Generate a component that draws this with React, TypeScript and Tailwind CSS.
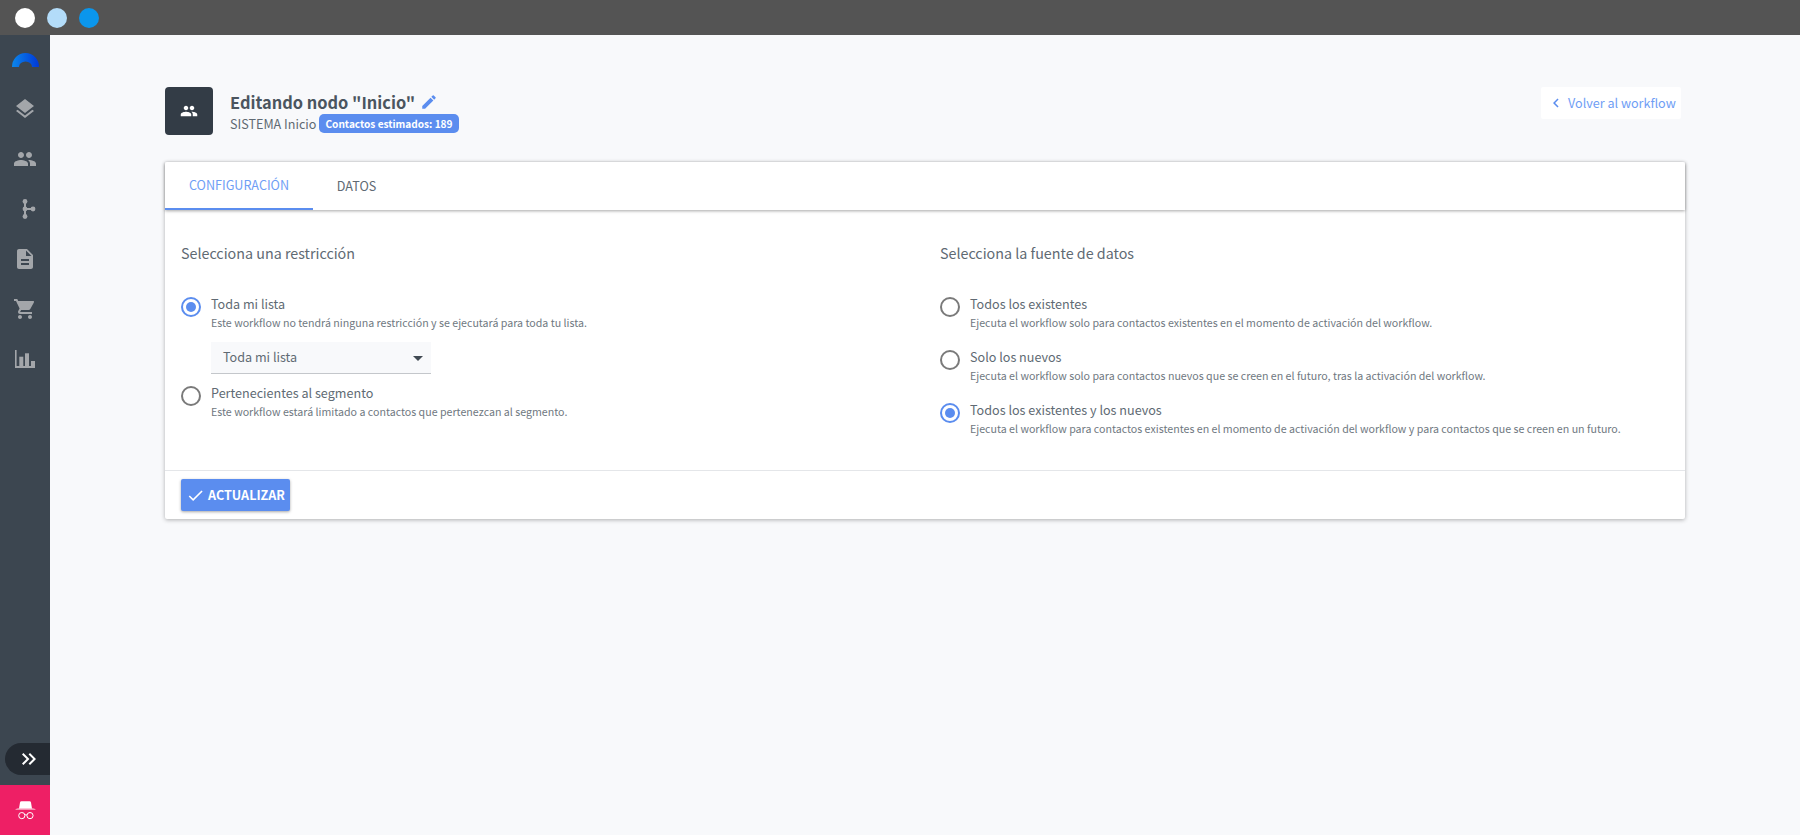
import { MdLayers, MdPeople, MdDescription, MdShoppingCart, MdEdit, MdChevronLeft, MdArrowDropDown, MdCheck, MdKeyboardDoubleArrowRight } from 'react-icons/md';

const font = { fontFamily: '"Noto Sans CJK JP", "Noto Sans", sans-serif' };

function Logo() {
  return (
    <svg width="27" height="14" viewBox="0 0 27 14">
      <defs>
        <linearGradient id="lg" x1="0" x2="1" y1="0" y2="0">
          <stop offset="0" stopColor="#0b86ea" />
          <stop offset="1" stopColor="#0038d8" />
        </linearGradient>
      </defs>
      <path d="M0 14 A13.5 14 0 0 1 27 14 H20 A6.5 5.5 0 0 0 7 14 Z" fill="url(#lg)" />
    </svg>
  );
}

function BranchIcon() {
  return (
    <svg width="24" height="24" viewBox="0 0 24 24" fill="#a3a6aa">
      <circle cx="12" cy="4.5" r="2.4" />
      <circle cx="12" cy="12" r="2.4" />
      <circle cx="12" cy="19.5" r="2.4" />
      <circle cx="20" cy="12" r="2.4" />
      <rect x="11" y="4" width="2" height="15" />
      <rect x="12" y="11" width="8" height="2" />
    </svg>
  );
}

function ChartIcon() {
  return (
    <svg width="20" height="18" viewBox="0 0 20 18" fill="#a3a6aa">
      <path d="M0 0h1.6v16H20v2H0z" />
      <rect x="4.3" y="6.7" width="4" height="10" />
      <rect x="10" y="3.3" width="4" height="13" />
      <rect x="16" y="11" width="4" height="6" />
    </svg>
  );
}

function SpyIcon() {
  return (
    <svg width="21" height="19" viewBox="0 0 21 19" fill="none">
      <path d="M5 1.5 Q5.2 0.2 6.5 0.2 H14.5 Q15.8 0.2 16 1.5 L17 7.6 H4 Z" fill="#fff" />
      <path d="M0 8.6 Q1.5 7.8 4 7.6 H17 Q19.5 7.8 21 8.6 Z" fill="#fff" />
      <circle cx="6.8" cy="14.6" r="3.1" stroke="#fff" strokeWidth="1" />
      <circle cx="15" cy="14.6" r="3.1" stroke="#fff" strokeWidth="1" />
      <path d="M9.9 14 Q10.9 13.4 11.9 14" stroke="#fff" strokeWidth="1" />
    </svg>
  );
}

function Radio({ checked }: { checked?: boolean }) {
  return (
    <span className={`flex h-5 w-5 shrink-0 items-center justify-center rounded-full border-2 ${checked ? 'border-[#5b8def]' : 'border-[#7a7a7a]'}`}>
      {checked && <span className="h-[10px] w-[10px] rounded-full bg-[#5b8def]" />}
    </span>
  );
}

function Option({ label, desc, checked }: { label: string; desc: string; checked?: boolean }) {
  return (
    <div className="flex gap-[10px]">
      <div className="pt-[3px]"><Radio checked={checked} /></div>
      <div>
        <div className="text-[12.6px] leading-[20px] text-[#606a73]">{label}</div>
        <div className="text-[10.65px] leading-[18px] text-[#6f7881]">{desc}</div>
      </div>
    </div>
  );
}

const navIcons = [
  <MdLayers key="a" size={24} color="#a3a6aa" />,
  <MdPeople key="b" size={24} color="#a3a6aa" />,
  <BranchIcon key="c" />,
  <MdDescription key="d" size={24} color="#a3a6aa" />,
  <MdShoppingCart key="e" size={24} color="#a3a6aa" />,
  <ChartIcon key="f" />,
];

export default function App() {
  return (
    <div className="flex h-[835px] w-full flex-col overflow-hidden bg-[#f8f9fb]" style={font}>
      <div className="flex h-[35px] shrink-0 items-center gap-3 bg-[#545454] pl-[15px]">
        <span className="h-5 w-5 rounded-full bg-white" />
        <span className="h-5 w-5 rounded-full bg-[#b3dcf9]" />
        <span className="h-5 w-5 rounded-full bg-[#0b96ec]" />
      </div>
      <div className="flex min-h-0 flex-1">
        <aside className="flex w-[50px] shrink-0 flex-col items-center bg-[#3c4650]">
          <div className="mt-[18px] flex h-[14px] items-center"><Logo /></div>
          <div className="mt-[30px] flex flex-col items-center gap-[26px]">
            {navIcons.map((icon, i) => (
              <div key={i} className="flex h-6 w-6 items-center justify-center">{icon}</div>
            ))}
          </div>
          <div className="mt-auto flex h-[32px] w-[45px] items-center justify-center self-end rounded-l-full bg-[#242a32] pl-[3px] text-white">
            <MdKeyboardDoubleArrowRight size={24} />
          </div>
          <div className="mt-[10px] flex h-[50px] w-full items-center justify-center bg-[#ee1f65]">
            <SpyIcon />
          </div>
        </aside>
        <main className="flex-1 pl-[115px] pr-[115px] pt-[52px]">
          <div className="flex items-start justify-between pr-[4px]">
            <div className="flex items-center gap-[17px]">
              <div className="flex h-12 w-12 items-center justify-center rounded-[4px] bg-[#333c46] text-white">
                <MdPeople size={18} />
              </div>
              <div>
                <div className="flex items-center gap-[5px] text-[16.4px] font-bold leading-[24px] text-[#4b555f]">
                  Editando nodo "Inicio"
                  <MdEdit size={18} color="#5b8def" />
                </div>
                <div className="flex items-center gap-[3px] text-[12.6px] leading-[19px] text-[#606a73]">
                  SISTEMA Inicio
                  <span className="rounded-[5px] bg-[#5b8def] px-[6px] text-[10.1px] font-bold leading-[19px] text-white">Contactos estimados: 189</span>
                </div>
              </div>
            </div>
            <button className="flex h-8 w-[140px] items-center gap-[3px] whitespace-nowrap rounded-[2px] bg-white pl-[6px] text-[12.6px] text-[#6f9ef5]">
              <MdChevronLeft size={18} color="#5b8def" />
              Volver al workflow
            </button>
          </div>
          <div className="mt-[27px] rounded-[2px] bg-white shadow-[0_1px_4px_rgba(0,0,0,0.3)]">
            <div className="flex h-[48px] shadow-[0_1px_3px_rgba(0,0,0,0.35)]">
              <div className="flex w-[148px] items-center justify-center border-b-2 border-[#5b8def] pt-[1px] text-[12.6px] text-[#6f9ef5]">CONFIGURACIÓN</div>
              <div className="flex w-[87px] items-center justify-center pt-[1px] text-[12.6px] text-[#606a73]">DATOS</div>
            </div>
            <div className="grid h-[261px] grid-cols-[759px_1fr] border-b border-[#e4e6e9] px-4 pt-[32px]">
              <div>
                <h2 className="text-[14.3px] leading-[22px] text-[#606a73]">Selecciona una restricción</h2>
                <div className="mt-[30px]">
                  <Option checked label="Toda mi lista" desc="Este workflow no tendrá ninguna restricción y se ejecutará para toda tu lista." />
                  <div className="mb-[9px] ml-[30px] mt-[10px] flex h-[32px] w-[220px] items-center justify-between border-b border-[#c4c7cb] bg-[#f8f9fb] pl-3 pr-[1px] text-[12.6px] text-[#606a73]">
                    Toda mi lista
                    <MdArrowDropDown size={24} color="#414a53" />
                  </div>
                  <Option label="Pertenecientes al segmento" desc="Este workflow estará limitado a contactos que pertenezcan al segmento." />
                </div>
              </div>
              <div>
                <h2 className="text-[14.3px] leading-[22px] text-[#606a73]">Selecciona la fuente de datos</h2>
                <div className="mt-[30px] flex flex-col gap-[15px]">
                  <Option label="Todos los existentes" desc="Ejecuta el workflow solo para contactos existentes en el momento de activación del workflow." />
                  <Option label="Solo los nuevos" desc="Ejecuta el workflow solo para contactos nuevos que se creen en el futuro, tras la activación del workflow." />
                  <Option checked label="Todos los existentes y los nuevos" desc="Ejecuta el workflow para contactos existentes en el momento de activación del workflow y para contactos que se creen en un futuro." />
                </div>
              </div>
            </div>
            <div className="flex h-[48px] items-center px-4">
              <button className="flex h-8 w-[109px] items-center gap-[3px] rounded-[2px] bg-[#5b8def] pl-[5px] text-[12.6px] font-bold text-white shadow-[0_1px_3px_rgba(0,0,0,0.35)]">
                <MdCheck size={19} />
                ACTUALIZAR
              </button>
            </div>
          </div>
        </main>
      </div>
    </div>
  );
}
